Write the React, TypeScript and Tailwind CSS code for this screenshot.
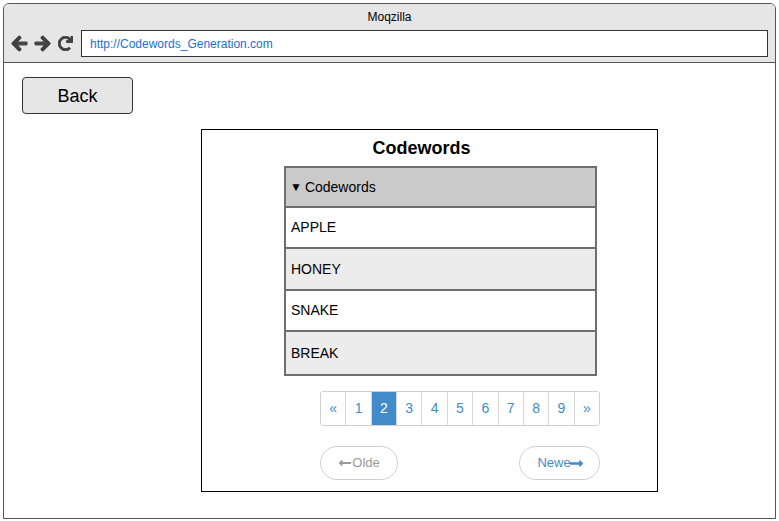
import React from 'react'
import { FaArrowLeft, FaArrowRight, FaRedo, FaLongArrowAltLeft, FaLongArrowAltRight } from 'react-icons/fa'

const WORDS = [
  { w: 'APPLE', h: 'h-[41px]' },
  { w: 'HONEY', h: 'h-[42px]' },
  { w: 'SNAKE', h: 'h-[41px]' },
  { w: 'BREAK', h: 'h-[42px]' },
]
const PAGES = ['«', '1', '2', '3', '4', '5', '6', '7', '8', '9', '»']

function NavIcons() {
  return (
    <div className="flex items-center gap-[6px] text-[#404040]">
      <FaArrowLeft size={17} stroke="currentColor" strokeWidth={40} />
      <FaArrowRight size={17} stroke="currentColor" strokeWidth={40} />
      <FaRedo size={15} stroke="currentColor" strokeWidth={30} className="ml-[1px]" />
    </div>
  )
}

export default function App() {
  return (
    <div className="w-[779px] h-[521px] bg-white p-[3px] pr-[3px] pb-[2px]" style={{ fontFamily: '"Liberation Sans", Arial, sans-serif' }}>
      <div className="h-full flex flex-col border border-[#555] rounded-t-[6px] overflow-hidden">
        {/* title bar */}
        <div className="h-[59px] bg-[#e6e6e6] border-b border-[#555] flex flex-col shrink-0">
          <div className="h-[26px] flex items-center justify-center text-[12px] text-black">Moqzilla</div>
          <div className="flex items-center pl-[7px] pr-[7px] gap-[8px]">
            <NavIcons />
            <div className="flex-1 h-[27px] bg-white border border-[#333] flex items-center pl-[8px] text-[12px] text-[#1a6fe0]">
              http://Codewords_Generation.com
            </div>
          </div>
        </div>

        {/* content */}
        <div className="flex-1 pt-[14px] pl-[18px]">
          <button className="w-[111px] h-[37px] bg-[#e6e6e6] border border-[#333] rounded-[4px] text-[18px] text-black pt-[1px]">
            Back
          </button>
          <div className="mt-[15px] ml-[179px] w-[457px] h-[363px] border border-black bg-white">
            <div className="h-[36px] flex items-center justify-center pr-[16px] text-[18px] font-bold text-black pt-[1px]">
              Codewords
            </div>
            <div className="ml-[82px] w-[313px] border-2 border-[#6e6e6e]">
              <div className="h-[40px] bg-[#cacaca] border-b-2 border-[#6e6e6e] flex items-center pl-[4px] text-[14px] text-black">
                <span className="text-[12px] mr-[3px]">▼</span>Codewords
              </div>
              {WORDS.map((r, i) => (
                <div
                  key={r.w}
                  className={`${r.h} flex items-center pl-[5px] text-[14px] text-black ${i % 2 === 1 ? 'bg-[#ececec]' : 'bg-white'} ${i < WORDS.length - 1 ? 'border-b-2 border-[#6e6e6e]' : ''}`}
                >
                  {r.w}
                </div>
              ))}
            </div>

            <div className="ml-[118px] mt-[15px] w-[280px]">
              <div className="flex h-[35px] border border-[#d0d0d0] rounded-[3px] overflow-hidden">
                {PAGES.map((p, i) => (
                  <div
                    key={p}
                    className={`flex-1 flex items-center justify-center text-[14px] ${i > 0 ? 'border-l border-[#d6d6d6]' : ''} ${p === '2' ? 'bg-[#428bca] text-white' : 'bg-white text-[#428bca]'}`}
                  >
                    {p}
                  </div>
                ))}
              </div>
              <div className="flex justify-between mt-[20px]">
                <div className="w-[78px] h-[34px] rounded-full border border-[#d0d0d0] flex items-center justify-center text-[13px] text-[#9a9a9a]">
                  <FaLongArrowAltLeft size={14} />
                  Olde
                </div>
                <div className="w-[81px] h-[34px] rounded-full border border-[#d0d0d0] flex items-center justify-center pl-[2px] text-[13px] text-[#428bca]">
                  Newe
                  <FaLongArrowAltRight size={15} className="-ml-[2px]" />
                </div>
              </div>
            </div>
          </div>
        </div>
      </div>
    </div>
  )
}
